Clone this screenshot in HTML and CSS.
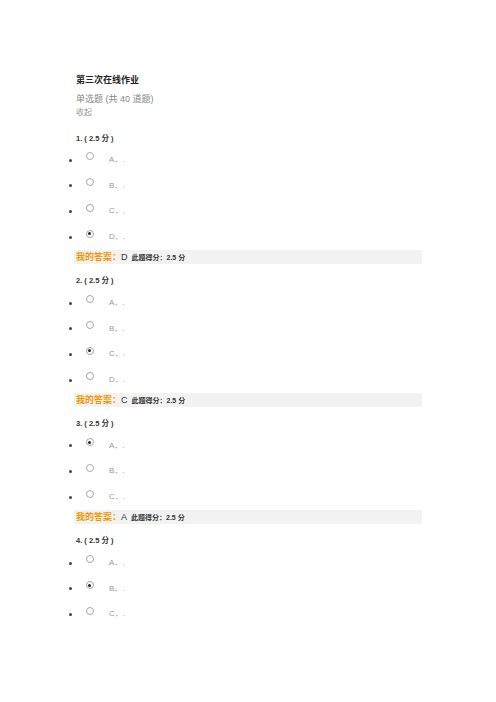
FILE: index.html
```html
<!DOCTYPE html>
<html lang="zh">
<head>
<meta charset="utf-8">
<link rel="stylesheet" href="styles.css">
</head>
<body>
<div class="page">
  <div class="title">第三次在线作业</div>
  <div class="subtitle">单选题 (共 40 道题)</div>
  <div class="collapse">收起</div>

  <div class="q">
    <div class="qhead">1. ( 2.5 分 )</div>
    <ul class="opts">
      <li><span class="radio"></span><span class="label">A．.</span></li>
      <li><span class="radio"></span><span class="label">B．.</span></li>
      <li><span class="radio"></span><span class="label">C．.</span></li>
      <li><span class="radio on"></span><span class="label">D．.</span></li>
    </ul>
    <div class="ans"><span class="mine">我的答案：</span><span class="letter">D</span><span class="score">此题得分：2.5 分</span></div>
  </div>

  <div class="q">
    <div class="qhead">2. ( 2.5 分 )</div>
    <ul class="opts">
      <li><span class="radio"></span><span class="label">A．.</span></li>
      <li><span class="radio"></span><span class="label">B．.</span></li>
      <li><span class="radio on"></span><span class="label">C．.</span></li>
      <li><span class="radio"></span><span class="label">D．.</span></li>
    </ul>
    <div class="ans"><span class="mine">我的答案：</span><span class="letter">C</span><span class="score">此题得分：2.5 分</span></div>
  </div>

  <div class="q">
    <div class="qhead">3. ( 2.5 分 )</div>
    <ul class="opts">
      <li><span class="radio on"></span><span class="label">A．.</span></li>
      <li><span class="radio"></span><span class="label">B．.</span></li>
      <li><span class="radio"></span><span class="label">C．.</span></li>
    </ul>
    <div class="ans"><span class="mine">我的答案：</span><span class="letter">A</span><span class="score">此题得分：2.5 分</span></div>
  </div>

  <div class="q">
    <div class="qhead">4. ( 2.5 分 )</div>
    <ul class="opts">
      <li><span class="radio"></span><span class="label">A．.</span></li>
      <li><span class="radio on"></span><span class="label">B．.</span></li>
      <li><span class="radio"></span><span class="label">C．.</span></li>
    </ul>
  </div>
</div>
</body>
</html>
```
FILE: styles.css
```css
html, body {
  margin: 0;
  padding: 0;
  background: #fff;
}
body {
  font-family: "Liberation Sans", "Noto Sans CJK SC", sans-serif;
  color: #333;
}
.page {
  padding: 74px 74px 0 76px;
}
.title {
  font-size: 9px;
  font-weight: bold;
  color: #222;
  line-height: 12px;
}
.subtitle {
  margin-top: 7px;
  font-size: 9px;
  color: #888;
  line-height: 13px;
}
.collapse {
  margin-top: 1px;
  padding-bottom: 3px;
  font-size: 8px;
  color: #999;
  line-height: 11px;
}
.q {
  margin-top: 12.5px;
}
.qhead {
  font-size: 7.5px;
  font-weight: bold;
  color: #333;
  line-height: 10px;
}
.opts {
  list-style: none;
  margin: 3.65px 0 0 0;
  padding: 0;
}
.opts li {
  position: relative;
  display: flex;
  align-items: center;
  height: 25.7px;
  padding-left: 9.5px;
}
.opts li::before {
  content: "";
  position: absolute;
  left: -7.5px;
  top: 11.5px;
  width: 3px;
  height: 3px;
  border-radius: 50%;
  background: #444;
}
.radio {
  position: relative;
  top: -3.5px;
  width: 6px;
  height: 6px;
  border: 1px solid #a8a8a8;
  border-radius: 50%;
  box-sizing: content-box;
  background: #fff;
}
.radio.on::after {
  content: "";
  position: absolute;
  left: 1.5px;
  top: 1.5px;
  width: 3px;
  height: 3px;
  border-radius: 50%;
  background: #222;
}
.label {
  margin-left: 15.5px;
  font-size: 8px;
  color: #999;
  line-height: 10px;
}
.ans {
  margin-left: -2px;
  height: 14px;
  display: flex;
  align-items: center;
  background: #f2f2f2;
  padding-left: 2px;
}
.mine {
  font-size: 9px;
  font-weight: bold;
  color: #f39800;
}
.letter {
  font-size: 9px;
  color: #333;
  margin-right: 4px;
}
.score {
  font-size: 7px;
  font-weight: bold;
  color: #333;
}
```
